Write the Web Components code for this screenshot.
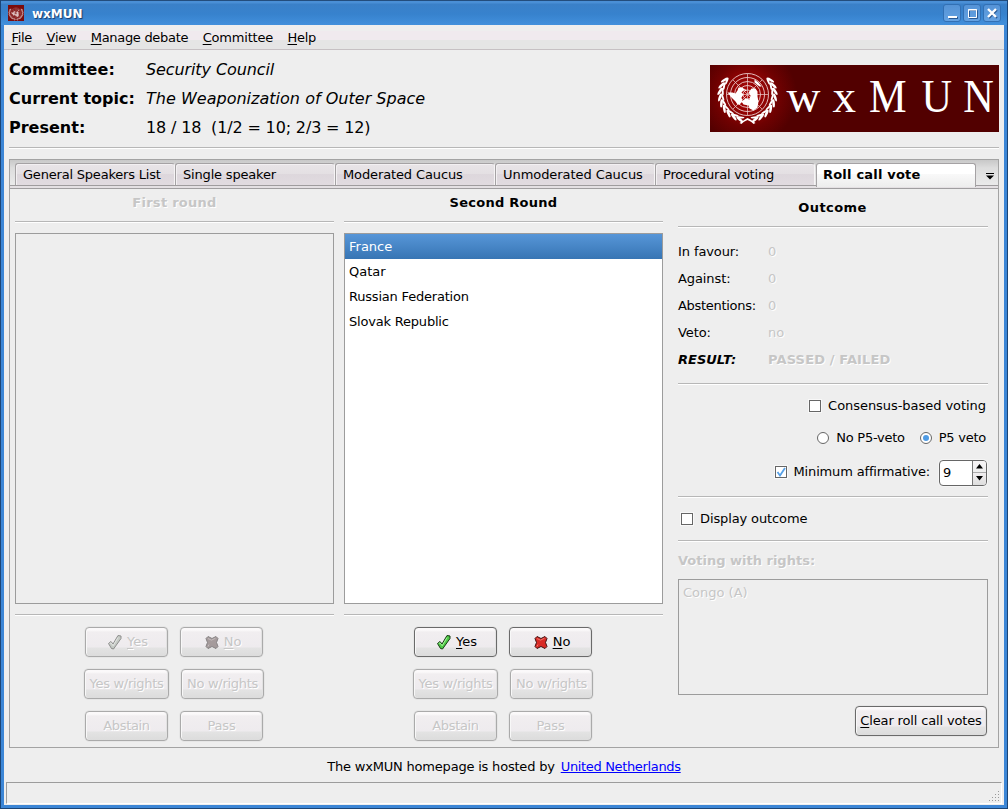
<!DOCTYPE html>
<html lang="en"><head><meta charset="utf-8"><title>wxMUN</title>
<style>
html,body{margin:0;padding:0}
body{width:1008px;height:809px;overflow:hidden;font:13px/16px "DejaVu Sans",sans-serif;color:#000;background:#16365f}
</style></head><body>
<mun-window></mun-window>
<script>
function define(name, css, html, setup){
  const t=document.createElement('template');
  t.innerHTML='<style>*{box-sizing:border-box}:host{display:block;box-sizing:border-box}u{text-underline-offset:2px;text-decoration-thickness:1px;text-decoration-skip-ink:none}'+css+'</style>'+html;
  customElements.define(name,class extends HTMLElement{
    constructor(){super();this.attachShadow({mode:'open'}).appendChild(t.content.cloneNode(true));}
    connectedCallback(){
      if(this.hasAttribute('track'))this.style.letterSpacing=this.getAttribute('track')+'px';
      if(setup)setup(this,this.shadowRoot);
    }
  });
}
const leaves=(()=>{let s='';
  for(let i=0;i<9;i++){
    const deg=106+i*13.5, a=deg*Math.PI/180, d=deg+90;
    const x=Math.cos(a)*27.8, y=Math.sin(a)*26;
    s+=`<ellipse cx="${x.toFixed(1)}" cy="${y.toFixed(1)}" rx="4.2" ry="1.3" transform="rotate(${d+24} ${x.toFixed(1)} ${y.toFixed(1)})"/>`;
    const x2=Math.cos(a)*25,y2=Math.sin(a)*23.8;
    s+=`<ellipse cx="${x2.toFixed(1)}" cy="${y2.toFixed(1)}" rx="3.8" ry="1" transform="rotate(${d-12} ${x2.toFixed(1)} ${y2.toFixed(1)})"/>`;
  }
  return s;})();
const emblem=`<g fill="none" stroke="#ecd0d0" stroke-width=".9"><circle r="21"/><circle r="17"/><circle r="13"/><circle r="9"/><circle r="4.5"/><path d="M0-21V21M-21 0H21M-14.800-14.800L14.800 14.800M14.800-14.800L-14.800 14.800" stroke-width=".7"/></g>
<g fill="#fff"><path d="M-20-2l5 0 3 1 2-3 1-3 4 0 2 2-3 3 2 2-2 3 1 4-3 3-2 0-2-3-4-4zM4-6l4 0 2 3 0 5 1 5-1 6-4 3-4-2-1-3-5-1-2-3 4-3 4 1 1-4-2-3zM7-15l4 3 3 4-2 0-5-4zM-3-6l2 2-2 1z"/>
<g>${leaves}</g><g transform="scale(-1 1)">${leaves}</g><path d="M-8 28.500C-5 26-2 25 0 23.500 3 25 5 26 8 28.500L6 29.500C4 27 2 26.500 0 25.500-2 26.500-4 27-6 29.500z"/></g>`;

define('mun-emblem',':host{width:16px;height:16px}svg{display:block}',
`<svg width="16" height="16" viewBox="-32 -32 64 64"><rect x="-32" y="-32" width="64" height="64" fill="#7b0c0c"/><g opacity=".75">${emblem}</g></svg>`);
define('mun-logo',':host{width:289px;height:67px}svg{display:block}',
`<svg width="289" height="67"><defs><radialGradient id="g" gradientUnits="userSpaceOnUse" cx="37" cy="30" r="50"><stop offset="0" stop-color="#b00606"/><stop offset=".4" stop-color="#8e0303"/><stop offset=".65" stop-color="#6e0101"/><stop offset="1" stop-color="#520000"/></radialGradient></defs>
<rect width="289" height="67" fill="#520000"/><rect width="90" height="67" fill="url(#g)"/>
<g transform="translate(37.500 29.500)">${emblem}</g>
<g font-family="Liberation Serif,serif" fill="#fff"><text x="76.500 122.500" y="47" font-size="47">wx</text><text transform="translate(159 47) scale(.92 1)" x="0 57 102.500" y="0" font-size="46">MUN</text></g></svg>`);

define('title-bar',`:host{height:25px;display:flex;align-items:center;padding:1px 6px 0 7px;color:#fff;font-weight:bold;background:linear-gradient(#234d7d 0 1px,#4a8fd6 1px 3px,#3a80c8 4px,#3782cd 14px,#4290dc)}
b{flex:1;padding:1px 0 0 8px;font-size:12px;text-shadow:1px 1px 1px #16396a}
i{display:block;width:18px;height:18px;margin-left:2px;border:1px solid #3270b4;border-radius:3px;background:linear-gradient(#5593d6,#64a2e2)}svg{display:block}`,
`<mun-emblem></mun-emblem><b>wxMUN</b>
<i><svg width="16" height="16"><path d="M5 13h9" stroke="#2a5a94" stroke-width="2"/><path d="M4 12h9" stroke="#fff" stroke-width="2"/></svg></i>
<i><svg width="16" height="16" fill="none"><path d="M5.500 5.500h8v8h-8z" stroke="#2a5a94"/><path d="M4.500 4.500h8v8h-8zM4 5h9" stroke="#fff"/></svg></i>
<i><svg width="16" height="16"><path d="M5 5l8 8M13 5l-8 8" stroke="#2a5a94" stroke-width="2"/><path d="M4 4l8 8M12 4l-8 8" stroke="#fff" stroke-width="2.400"/></svg></i>`);

define('menu-bar',':host{display:flex;gap:14.5px;height:25px;padding:5px 7.500px 0;letter-spacing:-.3px;background:linear-gradient(#eee 0 6px,#f0eaee 6px 15px,#e5e5e5 15px);border-bottom:1px solid #c6c0c3}',
`<span><u>F</u>ile</span><span><u>V</u>iew</span><span><u>M</u>anage debate</span><span style="letter-spacing:-.2px"><u>C</u>ommittee</span><span><u>H</u>elp</span>`);

define('sep-line',':host{height:2px;border-top:1px solid #b7b7b7;border-bottom:1px solid #fff;flex:none}','');

define('info-header',`:host{display:flex;justify-content:space-between;padding:5px 0 0 5px;height:97px;font-size:16px;line-height:29px}
dl{display:grid;grid-template-columns:137px auto;align-content:start;margin:0}dd{margin:0;white-space:pre}dt{font-weight:bold}mun-logo{margin:10px 5px 0 0}`,
`<dl><dt style="letter-spacing:.1px">Committee:</dt><dd><i style="letter-spacing:-.1px">Security Council</i></dd><dt>Current topic:</dt><dd><i style="letter-spacing:.02px">The Weaponization of Outer Space</i></dd><dt>Present:</dt><dd style="letter-spacing:-.15px">18 / 18  (1/2 = 10; 2/3 = 12)</dd></dl><mun-logo></mun-logo>`);

define('tab-item',`:host{width:160px;height:22px;padding:3px 0 0 7px;white-space:nowrap;border:1px solid #a5a2a4;border-right:1px solid #f6f4f5;border-bottom:0;border-radius:3px 3px 0 0;background:linear-gradient(#e9e5e8,#e4e0e3 10px,#ddd7dc 10px,#e1dbe0);box-shadow:inset 1px 1px #f3f0f2}
:host([active]){font-weight:bold;height:24px;margin-left:1px;padding-left:6px;background:linear-gradient(#fff 0 10px,#f9f9f9 10px,#ededed);border-right-color:#a5a2a4;box-shadow:none}`,`<slot></slot>`);
define('tab-strip',`:host{display:flex;height:29px;padding:3px 0 0 5px;background:linear-gradient(#c8c8c8,#ddd 8px,#eaeaea 25px,#9f9c9e 25px 26px,#e4e0e3 26px 28px,#a09ea0 28px)}
.m{width:22px;height:23px;display:grid;place-items:center}`,
`<tab-item track="-.2">General Speakers List</tab-item><tab-item track="-.18">Single speaker</tab-item><tab-item track="-.12">Moderated Caucus</tab-item><tab-item track="-.06">Unmoderated Caucus</tab-item><tab-item track="-.18">Procedural voting</tab-item><tab-item active track=".2">Roll call vote</tab-item><div class="m"><svg width="8" height="7" style="margin:3px 0 0 5px"><path d="M0 .5h8" stroke="#000"/><path d="M0 2.500h8L4 6.500z"/></svg></div>`);

define('list-box',':host{border:1px solid #9c9c9c;background:#fff}:host([disabled]){background:#eee;color:#c6c6c6;text-shadow:1px 1px #fff}','<slot></slot>');
define('list-item',':host{height:25px;line-height:25px;padding-left:4px}:host([selected]){color:#fff;background:linear-gradient(#5796d8,#3775b4)}','<slot></slot>');

define('push-button',`:host{display:flex;align-items:center;justify-content:center;gap:4px;width:83px;height:30px;padding-bottom:1px;border:1px solid #6a6a6a;border-radius:4px;background:linear-gradient(#fbf9fa 0 2px,#f1eef0 4px,#eeebee 19px,#e3e3e3 20px,#dcdcdc);box-shadow:inset 1px 0 #f8f8f8,inset -1px 0 #e2e2e2,0 0 0 .5px #ddd;white-space:nowrap}
:host([icon]){padding-left:2px}
:host([disabled]){border-color:#aaa;color:#c6c6c6;text-shadow:1px 1px #fff}svg{display:none;flex:none}:host([icon=yes]) .y,:host([icon=no]) .n{display:block}:host([disabled]) svg{filter:grayscale(.9);opacity:.5}`,
`<svg class="y" width="16" height="16"><path d="M1.500 9.500L4 7.500l2 2.500L11 1.500l3 .5 0 2.500L6.500 15 4.500 14.500z" fill="#4ecb45" stroke="#173b14"/><path d="M2.800 9.600l1.200-.8 2.200 3L11 3.500" fill="none" stroke="#a5f29b"/></svg>
<svg class="n" width="16" height="16"><path d="M4 2.500l4 2 4-2 2 2-1.500 4 1.500 4-2 2-4-2-4 2-2-2 1.500-4-1.500-4z" fill="#d82b26" stroke="#401010"/><path d="M4 4.500l3.500 1.700 4-2M4 12.500l1-2" fill="none" stroke="#f4746b"/></svg><span><slot></slot></span>`);

define('vote-column',`:host{width:319px;display:flex;flex-direction:column}
h2{font-size:13px;line-height:16px;height:26px;margin:6px 0 0;text-align:center;letter-spacing:.27px}:host([disabled]) h2{color:#c6c6c6;text-shadow:1px 1px #fff}
list-box{height:371px;margin:10px 0}
.b{display:grid;grid-template-columns:85px 84px;justify-items:center;column-gap:11px;row-gap:12px;padding:11px 0 0 69px}
.l{justify-self:start}.e{justify-self:end}`,
`<h2><slot name="title"></slot></h2><sep-line></sep-line><list-box><slot></slot></list-box><sep-line></sep-line>
<div class="b"><push-button icon="yes"><u>Y</u>es</push-button><push-button class="l" icon="no"><u>N</u>o</push-button><push-button disabled style="width:85px" track="-.3">Yes w/rights</push-button><push-button class="e" disabled track="-.3">No w/rights</push-button><push-button disabled track="-.35">Abstain</push-button><push-button class="l" disabled track="-.2">Pass</push-button></div>`,
(el,r)=>{if(el.hasAttribute('disabled'))r.querySelectorAll('list-box,push-button').forEach(e=>e.setAttribute('disabled',''));});

define('check-box',`:host{display:flex;align-items:center;gap:7px}i{width:12px;height:12px;border:1px solid #666;background:#fff;box-shadow:0 0 0 1px #f8f8f8}svg{display:none}:host([checked]) svg{display:block}`,
`<i><svg width="10" height="10"><path d="M1.500 5l2.500 3.500L9 1" fill="none" stroke="#57a0e6" stroke-width="1.800"/></svg></i><span><slot></slot></span>`);
define('radio-item',`:host{display:flex;align-items:center;gap:7px}svg{display:block}.d{display:none}:host([checked]) .d{display:block}`,
`<svg width="12" height="12"><circle cx="6" cy="6" r="5.500" fill="#fff" stroke="#666"/><circle class="d" cx="6" cy="6" r="3" fill="#4f9be4"/></svg><span><slot></slot></span>`);
define('spin-box',`:host{display:flex;width:48px;height:26px;border:1px solid #666;border-radius:4px;background:#fff;overflow:hidden;box-shadow:0 0 0 1px #f5f5f5}
span{flex:1;padding:4px 0 0 3px}div{width:14px;border-left:1px solid #777;background:linear-gradient(#f7f5f6,#eee 11px,#aaa 11px 12px,#f1eef0 12px,#dedede)}svg{display:block}`,
`<span><slot></slot></span><div><svg width="13" height="24"><path d="M3 7.500h7L6.500 3zM3 15h7l-3.500 4.500z"/></svg></div>`);

define('outcome-panel',`:host{width:310px;display:flex;flex-direction:column}
h2{font-size:13px;line-height:16px;margin:11px 0 10px;text-align:center;padding-right:1px;letter-spacing:.4px}
dl{display:grid;grid-template-columns:90px auto;margin:10px 0 10px;line-height:27px}dd,dt{margin:0}dt{letter-spacing:-.1px}dd,.off{color:#c6c6c6;text-shadow:1px 1px #fff}
.r{display:flex;justify-content:flex-end;align-items:center;gap:15px;padding-right:2px}
.off{font-weight:bold;line-height:16px;margin:11px 0 10px}list-box{height:116px}
push-button{width:132px;margin:11px 1px 0 auto}`,
`<h2>Outcome</h2><sep-line></sep-line>
<dl><dt>In favour:</dt><dd>0</dd><dt>Against:</dt><dd>0</dd><dt style="letter-spacing:-.3px">Abstentions:</dt><dd>0</dd><dt>Veto:</dt><dd>no</dd><dt style="letter-spacing:0"><b><i>RESULT:</i></b></dt><dd style="letter-spacing:.15px"><b>PASSED / FAILED</b></dd></dl>
<sep-line></sep-line>
<div class="r" style="height:42px"><check-box track="-.05">Consensus-based voting</check-box></div>
<div class="r" style="height:22px"><radio-item track="-.25">No P5-veto</radio-item><radio-item checked track="-.25">P5 veto</radio-item></div>
<div class="r" style="height:47px;gap:9px;padding-right:1px"><check-box checked track="-.16" style="padding-bottom:2px">Minimum affirmative:</check-box><spin-box>9</spin-box></div>
<sep-line></sep-line><check-box style="height:42px;padding-left:3px" track="-.12">Display outcome</check-box><sep-line></sep-line>
<div class="off">Voting with rights:</div><list-box disabled><list-item>Congo (A)</list-item></list-box>
<push-button track="-.15"><u>C</u>lear roll call votes</push-button>`);

define('note-book',`:host{height:589px;border:1px solid #a3a3a3;margin:10px 5px 0}.p{display:flex;padding-left:5px}vote-column{margin-right:10px}outcome-panel{margin-left:5px}`,
`<tab-strip></tab-strip><div class="p"><vote-column disabled><span slot="title">First round</span></vote-column>
<vote-column><span slot="title">Second Round</span><list-item selected>France</list-item><list-item>Qatar</list-item><list-item track="-.2">Russian Federation</list-item><list-item track="-.2">Slovak Republic</list-item></vote-column><outcome-panel></outcome-panel></div>`);

define('status-bar',`:host{height:22px;margin:0 2px;border:1px solid #9c9c9c;border-right-color:#fff;border-bottom-color:#fff;display:flex;justify-content:flex-end;align-items:flex-end}svg{display:block}`,
`<svg width="12" height="12" fill="#999"><path d="M9 0h1v1H9zM6 3h1v1H6zM9 3h1v1H9zM3 6h1v1H3zM6 6h1v1H6zM9 6h1v1H9zM0 9h1v1H0zM3 9h1v1H3zM6 9h1v1H6zM9 9h1v1H9z"/></svg>`);

define('mun-window',`:host{width:1008px;height:809px;padding:0 1px 1px;background:#1c4576;display:flex}
.f{flex:1;display:flex;flex-direction:column;background:#3c86d6;padding:0 3px 3px;border-radius:3px 3px 0 0}
.c{background:#eee;height:780px}title-bar{margin:0 -3px}sep-line.h{margin:0 5px}
footer{height:34px;display:flex;justify-content:center;gap:6px;padding-top:11px;letter-spacing:-.2px}a{color:#00f;text-decoration:underline;letter-spacing:-.34px}`,
`<div class="f"><title-bar></title-bar><div class="c"><menu-bar></menu-bar><info-header></info-header><sep-line class="h"></sep-line><note-book></note-book>
<footer><span>The wxMUN homepage is hosted by</span><a>United Netherlands</a></footer><status-bar></status-bar></div></div>`);
</script></body></html>
